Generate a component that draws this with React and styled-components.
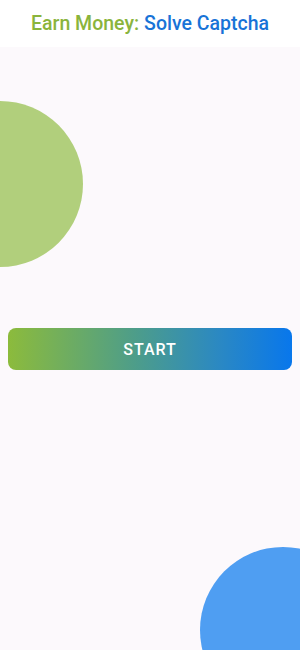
import React from "react";
import styled, { createGlobalStyle } from "styled-components";

const GlobalStyle = createGlobalStyle`
  html, body {
    margin: 0;
    padding: 0;
    background: #fcf9fc;
    font-family: Roboto, "Liberation Sans", sans-serif;
  }
`;

const App = () => {
  return (
    <Screen>
      <GlobalStyle />
      <Header>
        <Green>Earn Money:</Green> <Blue>Solve Captcha</Blue>
      </Header>
      <Body>
        <Blob color="#b1cf7c" size={166} style={{ left: -83, top: 54 }} />
        <Blob color="#4f9ef2" size={166} style={{ left: 200, top: 500 }} />
        <StartButton>START</StartButton>
      </Body>
    </Screen>
  );
};

const Screen = styled.div`
  width: 300px;
  height: 650px;
  overflow: hidden;
  display: flex;
  flex-direction: column;
  background: #fcf9fc;
`;

const Header = styled.div`
  height: 47px;
  background: #ffffff;
  display: flex;
  align-items: center;
  justify-content: center;
  gap: 5px;
  font-size: 19.5px;
  font-weight: 500;
  padding-bottom: 1px;
  box-sizing: border-box;
`;

const Green = styled.span`
  color: #8ab43c;
`;

const Blue = styled.span`
  color: #1873d7;
`;

const Body = styled.div`
  position: relative;
  flex: 1;
  padding: 281px 8px 0;
`;

const Blob = styled.div`
  position: absolute;
  width: ${(p) => p.size}px;
  height: ${(p) => p.size}px;
  border-radius: 50%;
  background: ${(p) => p.color};
`;

const StartButton = styled.button`
  position: relative;
  display: block;
  width: 100%;
  height: 42px;
  border: none;
  border-radius: 8px;
  background: linear-gradient(90deg, #8cbb3c 0%, #4d9d8a 45%, #2a88c4 75%, #0877ec 100%);
  color: #ffffff;
  font-family: Roboto, "Liberation Sans", sans-serif;
  font-size: 16px;
  font-weight: 500;
  letter-spacing: 1px;
`;

export default App;
